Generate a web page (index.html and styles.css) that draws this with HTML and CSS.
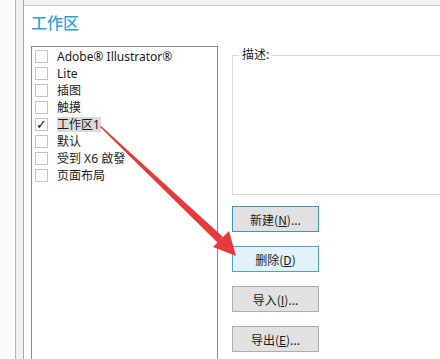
FILE: index.html
```html
<!DOCTYPE html>
<html lang="zh-CN">
<head>
  <meta charset="UTF-8">
  <title>工作区</title>
  <link rel="stylesheet" href="styles.css">
</head>
<body>
  <div class="window">
    <div class="rail"></div>
    <div class="gutter"></div>
    <div class="panel">
      <div class="band"></div>
      <div class="content">
        <h2 class="title">工作区</h2>
        <div class="body">
          <ul class="list">
            <li><span class="box"></span><span class="label">Adobe® Illustrator®</span></li>
            <li><span class="box"></span><span class="label">Lite</span></li>
            <li><span class="box"></span><span class="label">插图</span></li>
            <li><span class="box"></span><span class="label">触摸</span></li>
            <li><span class="box checked">✓</span><span class="label selected">工作区1</span></li>
            <li><span class="box"></span><span class="label">默认</span></li>
            <li><span class="box"></span><span class="label">受到 X6 啟發</span></li>
            <li><span class="box"></span><span class="label">页面布局</span></li>
          </ul>
          <div class="side">
            <fieldset class="desc">
              <legend>描述:</legend>
            </fieldset>
            <div class="buttons">
              <button class="btn default">新建(<u>N</u>)...</button>
              <button class="btn hover">删除(<u>D</u>)</button>
              <button class="btn">导入(<u>I</u>)...</button>
              <button class="btn">导出(<u>E</u>)...</button>
            </div>
          </div>
        </div>
      </div>
    </div>

    <!-- 标注箭头 -->
    <svg class="arrow" width="440" height="359" viewBox="0 0 440 359">
      <polygon points="100,127 101,126 223,237 218,243" fill="#e53a3a"/>
      <polygon points="236,256 213,247 229,231" fill="#e53a3a"/>
    </svg>
  </div>
</body>
</html>
```

FILE: styles.css
```css
html, body {
  margin: 0;
  padding: 0;
}
body {
  font-family: "Noto Sans", "Noto Sans CJK SC", sans-serif;
  font-size: 12px;
  color: #1a1a1a;
  background: #fff;
}
.window {
  position: relative;
  width: 440px;
  height: 359px;
  display: flex;
  overflow: hidden;
}
.rail {
  width: 15px;
  background: #fafafa;
  border-right: 1px solid #b4b4b4;
}
.gutter {
  width: 7px;
  background: #f0f0f0;
  border-right: 1px solid #a8a8a8;
}
.panel {
  flex: 1;
  display: flex;
  flex-direction: column;
  min-width: 0;
}
.band {
  height: 5px;
  background: #f2f2f2;
  border-bottom: 1px solid #c8c8c8;
}
.content {
  flex: 1;
  padding: 0 0 0 7px;
  display: flex;
  flex-direction: column;
}
.title {
  margin: 6px 0 0 0;
  height: 20px;
  line-height: 20px;
  font-size: 16px;
  font-weight: 500;
  color: #2ea3dc;
  font-family: "Noto Sans CJK SC", sans-serif;
}
.body {
  margin-top: 14px;
  flex: 1;
  display: flex;
}
.list {
  list-style: none;
  margin: 0;
  padding: 1px 0 0 3px;
  width: 182px;
  border: 1px solid #8a8a8a;
  border-bottom: none;
  background: #fff;
}
.list li {
  height: 17px;
  display: flex;
  align-items: center;
}
.box {
  width: 11px;
  height: 11px;
  border: 1px solid #c4c4c4;
  background: #fff;
  margin-right: 9px;
  display: flex;
  align-items: center;
  justify-content: center;
  font-size: 13px;
  line-height: 1;
  color: #111;
}
.box.checked {
  font-family: "DejaVu Sans", sans-serif;
  font-weight: bold;
}
.label {
  line-height: 15px;
  padding-right: 1px;
}
.label.selected {
  background: #dadada;
}
.side {
  margin-left: 14px;
  flex: 1;
  display: flex;
  flex-direction: column;
}
.desc {
  box-sizing: border-box;
  margin: 2px -40px 0 0;
  height: 147px;
  padding: 0;
  border: 1px solid #d9d9d9;
}
.desc legend {
  margin-left: 6px;
  padding: 0 3px;
  line-height: 14px;
}
.buttons {
  margin-top: 11px;
  display: flex;
  flex-direction: column;
  gap: 14px;
}
.btn {
  width: 87px;
  height: 26px;
  font-family: "Noto Sans CJK SC", sans-serif;
  font-size: 12px;
  color: #1a1a1a;
  background: #e1e1e1;
  border: 1px solid #adadad;
  padding: 0;
}
.btn.default {
  border-color: #3f93bd;
}
.btn.hover {
  background: #e2f1fb;
  border-color: #4ba1c8;
}
.arrow {
  position: absolute;
  left: 0;
  top: 0;
  pointer-events: none;
}
```
